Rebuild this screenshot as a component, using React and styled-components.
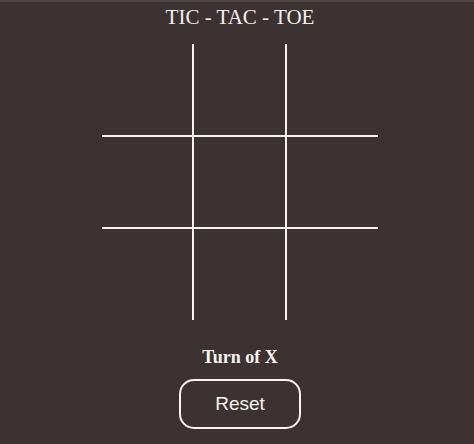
import React, { useState } from "react";
import styled, { createGlobalStyle } from "styled-components";

const GlobalStyle = createGlobalStyle`
  html, body {
    margin: 0;
    padding: 0;
    background: #3b3231;
    overflow: hidden;
  }
  body {
    border-top: 2px solid #4d4544;
    min-height: 100vh;
    box-sizing: border-box;
  }
`;

const Page = styled.div`
  width: 480px;
  display: flex;
  flex-direction: column;
  align-items: center;
  color: #ffffff;
`;

const Title = styled.h1`
  margin: 0;
  padding-top: 2px;
  font-family: "Liberation Serif", "Times New Roman", serif;
  font-weight: normal;
  font-size: 21px;
  line-height: 26px;
  color: #f4f1ee;
`;

const Board = styled.div`
  margin-top: 14px;
  width: 276px;
  height: 276px;
  display: grid;
  grid-template-columns: 90px 91px 91px;
  grid-template-rows: 91px 90px 91px;
  gap: 2px;
  background: #f7f4f0;
`;

const Cell = styled.button`
  border: none;
  padding: 0;
  margin: 0;
  background: #3b3231;
  color: #ffffff;
  font-family: "Liberation Sans", Arial, sans-serif;
  font-size: 56px;
  cursor: pointer;
`;

const Status = styled.div`
  margin-top: 26px;
  font-family: "Liberation Serif", "Times New Roman", serif;
  font-weight: bold;
  font-size: 18px;
  line-height: 22px;
  color: #f7f4f0;
`;

const ResetButton = styled.button`
  margin-top: 11px;
  width: 122px;
  height: 50px;
  box-sizing: border-box;
  border: 2px solid #f7f4f0;
  border-radius: 15px;
  background: transparent;
  color: #f7f4f0;
  font-family: "Liberation Sans", Arial, sans-serif;
  font-size: 19px;
  cursor: pointer;
`;

export default function App() {
  const [cells, setCells] = useState(Array(9).fill(""));
  const [turn, setTurn] = useState("X");

  const play = (i) => {
    if (cells[i]) return;
    const next = cells.slice();
    next[i] = turn;
    setCells(next);
    setTurn(turn === "X" ? "O" : "X");
  };

  const reset = () => {
    setCells(Array(9).fill(""));
    setTurn("X");
  };

  return (
    <>
      <GlobalStyle />
      <Page>
        <Title>TIC - TAC - TOE</Title>
        <Board>
          {cells.map((c, i) => (
            <Cell key={i} onClick={() => play(i)}>
              {c}
            </Cell>
          ))}
        </Board>
        <Status>Turn of {turn}</Status>
        <ResetButton onClick={reset}>Reset</ResetButton>
      </Page>
    </>
  );
}
